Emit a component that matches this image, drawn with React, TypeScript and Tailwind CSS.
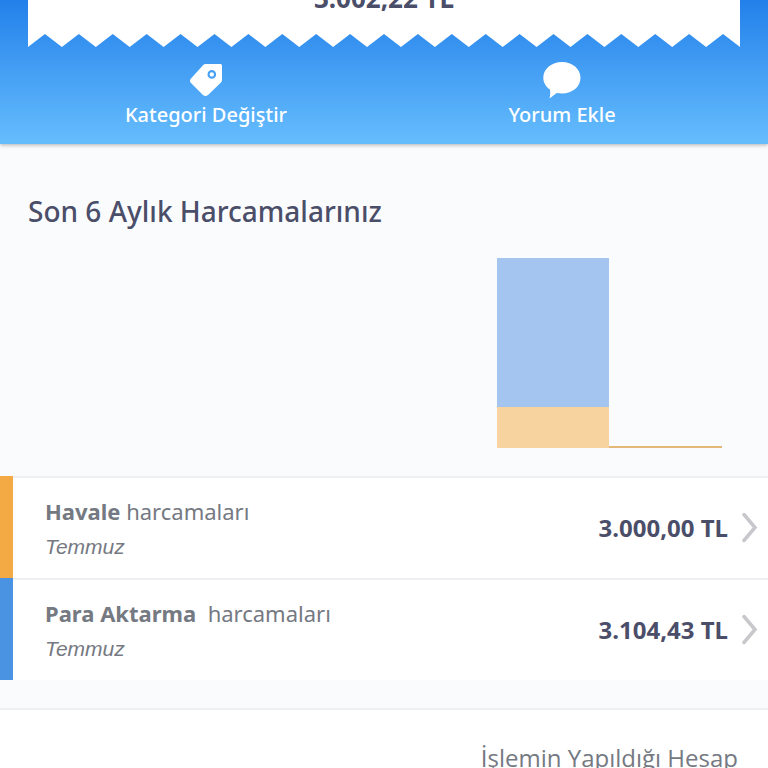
// src/pages/transactionDetail/TransactionDetail.tsx

type Month = { label: string; transfer: number; payment: number };

type Expense = {
    id: string;
    category: string;
    suffix: string;
    month: string;
    amount: string;
    bar: string;
};

// Bar heights in px
const MONTHS: Month[] = [
    { label: "Mart", transfer: 0, payment: 0 },
    { label: "Nisan", transfer: 0, payment: 0 },
    { label: "Mayıs", transfer: 0, payment: 0 },
    { label: "Haziran", transfer: 0, payment: 0 },
    { label: "Temmuz", transfer: 149, payment: 41 },
    { label: "Ağustos", transfer: 0, payment: 2 },
];

const EXPENSES: Expense[] = [
    {
        id: "havale",
        category: "Havale",
        suffix: " harcamaları",
        month: "Temmuz",
        amount: "3.000,00 TL",
        bar: "bg-[#f3a944]",
    },
    {
        id: "para-aktarma",
        category: "Para Aktarma",
        suffix: "\u00a0 harcamaları",
        month: "Temmuz",
        amount: "3.104,43 TL",
        bar: "bg-[#4a93e2]",
    },
];

const TEETH = 21;

// Torn paper edge, stretched to the receipt width
function ReceiptEdge() {
    let d = "M0 0V13";
    for (let i = 0; i < TEETH; i++) {
        d += `L${i * 34 + 17} 0L${(i + 1) * 34} 13`;
    }
    d += "V0Z";
    return (
        <svg
            viewBox={`0 0 ${TEETH * 34} 13`}
            preserveAspectRatio="none"
            className="block h-[13px] w-full"
            aria-hidden="true"
        >
            <path d={d} fill="#fff" />
        </svg>
    );
}

function TagIcon() {
    return (
        <svg viewBox="0 0 34 34" className="h-[34px] w-[34px]" aria-hidden="true">
            <path
                fill="#fff"
                fillRule="evenodd"
                d="M16.6 1H31.500Q33 1 33 2.500V17Q33 18.400 32 19.500L19 32Q16.500 34.200 14 32L2 20Q-0.200 17.700 2 15.400L14 2.200Q15.200 1 16.600 1ZM22.800 7.100A4.300 4.300 0 1 0 22.800 15.700A4.300 4.300 0 1 0 22.800 7.100Z"
            />
            <circle cx="22.800" cy="11.400" r="2.200" fill="#fff" />
        </svg>
    );
}

function CommentIcon() {
    return (
        <svg viewBox="0 0 38 37" className="h-[37px] w-[38px]" aria-hidden="true">
            <path
                fill="#fff"
                d="M19 0C29.500 0 37.500 7 37.500 15.800C37.500 24.800 29.500 31.500 19 31.500C17.200 31.500 15.400 31.300 13.800 31C11.500 32.300 9.300 34.600 6.600 36.500C7 34 7.600 30.500 7 27.600C2.800 24.700 .300 20.600 .300 15.800C.300 7 8.500 0 19 0Z"
            />
        </svg>
    );
}

function ChevronIcon() {
    return (
        <svg viewBox="0 0 16 32" className="h-8 w-4 shrink-0" aria-hidden="true">
            <path
                d="M2 2.500L13 15.500L2 28.500"
                fill="none"
                stroke="#c8c8cc"
                strokeWidth="3.500"
                strokeLinecap="round"
                strokeLinejoin="miter"
            />
        </svg>
    );
}

function ExpenseChart() {
    return (
        <div className="grid h-[190px] grid-cols-6 px-[46px]">
            {MONTHS.map((m) => (
                <div key={m.label} className="flex flex-col justify-end">
                    <div className="bg-[#a3c5f0]" style={{ height: m.transfer }} />
                    <div
                        className={m.transfer > 0 ? "bg-[#f7d3a0]" : "bg-[#e3b878]"}
                        style={{ height: m.payment }}
                    />
                </div>
            ))}
        </div>
    );
}

function ExpenseRow({ expense }: { expense: Expense }) {
    return (
        <li className="flex h-[102px] bg-white">
            <div className={`w-[13px] shrink-0 ${expense.bar}`} />
            <a
                href={`#${expense.id}`}
                className="flex flex-1 items-center border-t-2 border-[#eef0f3] pr-[10px] pl-8"
            >
                <div className="flex flex-1 flex-col gap-0.5 text-[#757982]">
                    <p className="text-[22px] leading-9">
                        <span className="font-bold">{expense.category}</span>
                        {expense.suffix}
                    </p>
                    <p className="font-['Liberation_Sans',sans-serif] text-[21px] leading-8 italic">
                        {expense.month}
                    </p>
                </div>
                <span className="mr-[14px] text-[24px] font-bold text-[#4b4e69]">{expense.amount}</span>
                <ChevronIcon />
            </a>
        </li>
    );
}

export default function App() {
    return (
        <main className="h-screen overflow-hidden bg-[#fafbfd] font-['Noto_Sans','Open_Sans',sans-serif]">
            <header className="relative bg-linear-to-b from-[#2180ea] to-[#66bdfd] px-7 shadow-[0_1px_4px_rgba(0,0,0,0.3)]">
                <div className="flex h-[34px] items-start justify-center overflow-hidden bg-white">
                    <p className="-mt-5 text-[26px] leading-9 font-bold text-[#4b4e69]">3.002,22 TL</p>
                </div>
                <ReceiptEdge />
                <div className="grid h-[97px] grid-cols-2 text-[20px] leading-7 font-medium text-white">
                    <button type="button" className="flex flex-col items-center pt-4">
                        <TagIcon />
                        <span className="mt-1">Kategori Değiştir</span>
                    </button>
                    <button type="button" className="flex flex-col items-center pt-[15px]">
                        <CommentIcon />
                        <span className="mt-[2px]">Yorum Ekle</span>
                    </button>
                </div>
            </header>

            <section>
                <h1 className="px-7 pt-[47px] pb-[27px] text-[28px] leading-10 font-medium text-[#4b4e69]">
                    Son 6 Aylık Harcamalarınız
                </h1>
                <ExpenseChart />
                <ul className="mt-7">
                    {EXPENSES.map((e) => (
                        <ExpenseRow key={e.id} expense={e} />
                    ))}
                </ul>
            </section>

            <section className="mt-7 border-t-2 border-[#eef0f3] bg-white px-[30px] pt-7 pb-10">
                <p className="text-right font-['Open_Sans',sans-serif] text-[24px] leading-10 text-[#757982]">
                    İşlemin Yapıldığı Hesap
                </p>
            </section>
        </main>
    );
}
